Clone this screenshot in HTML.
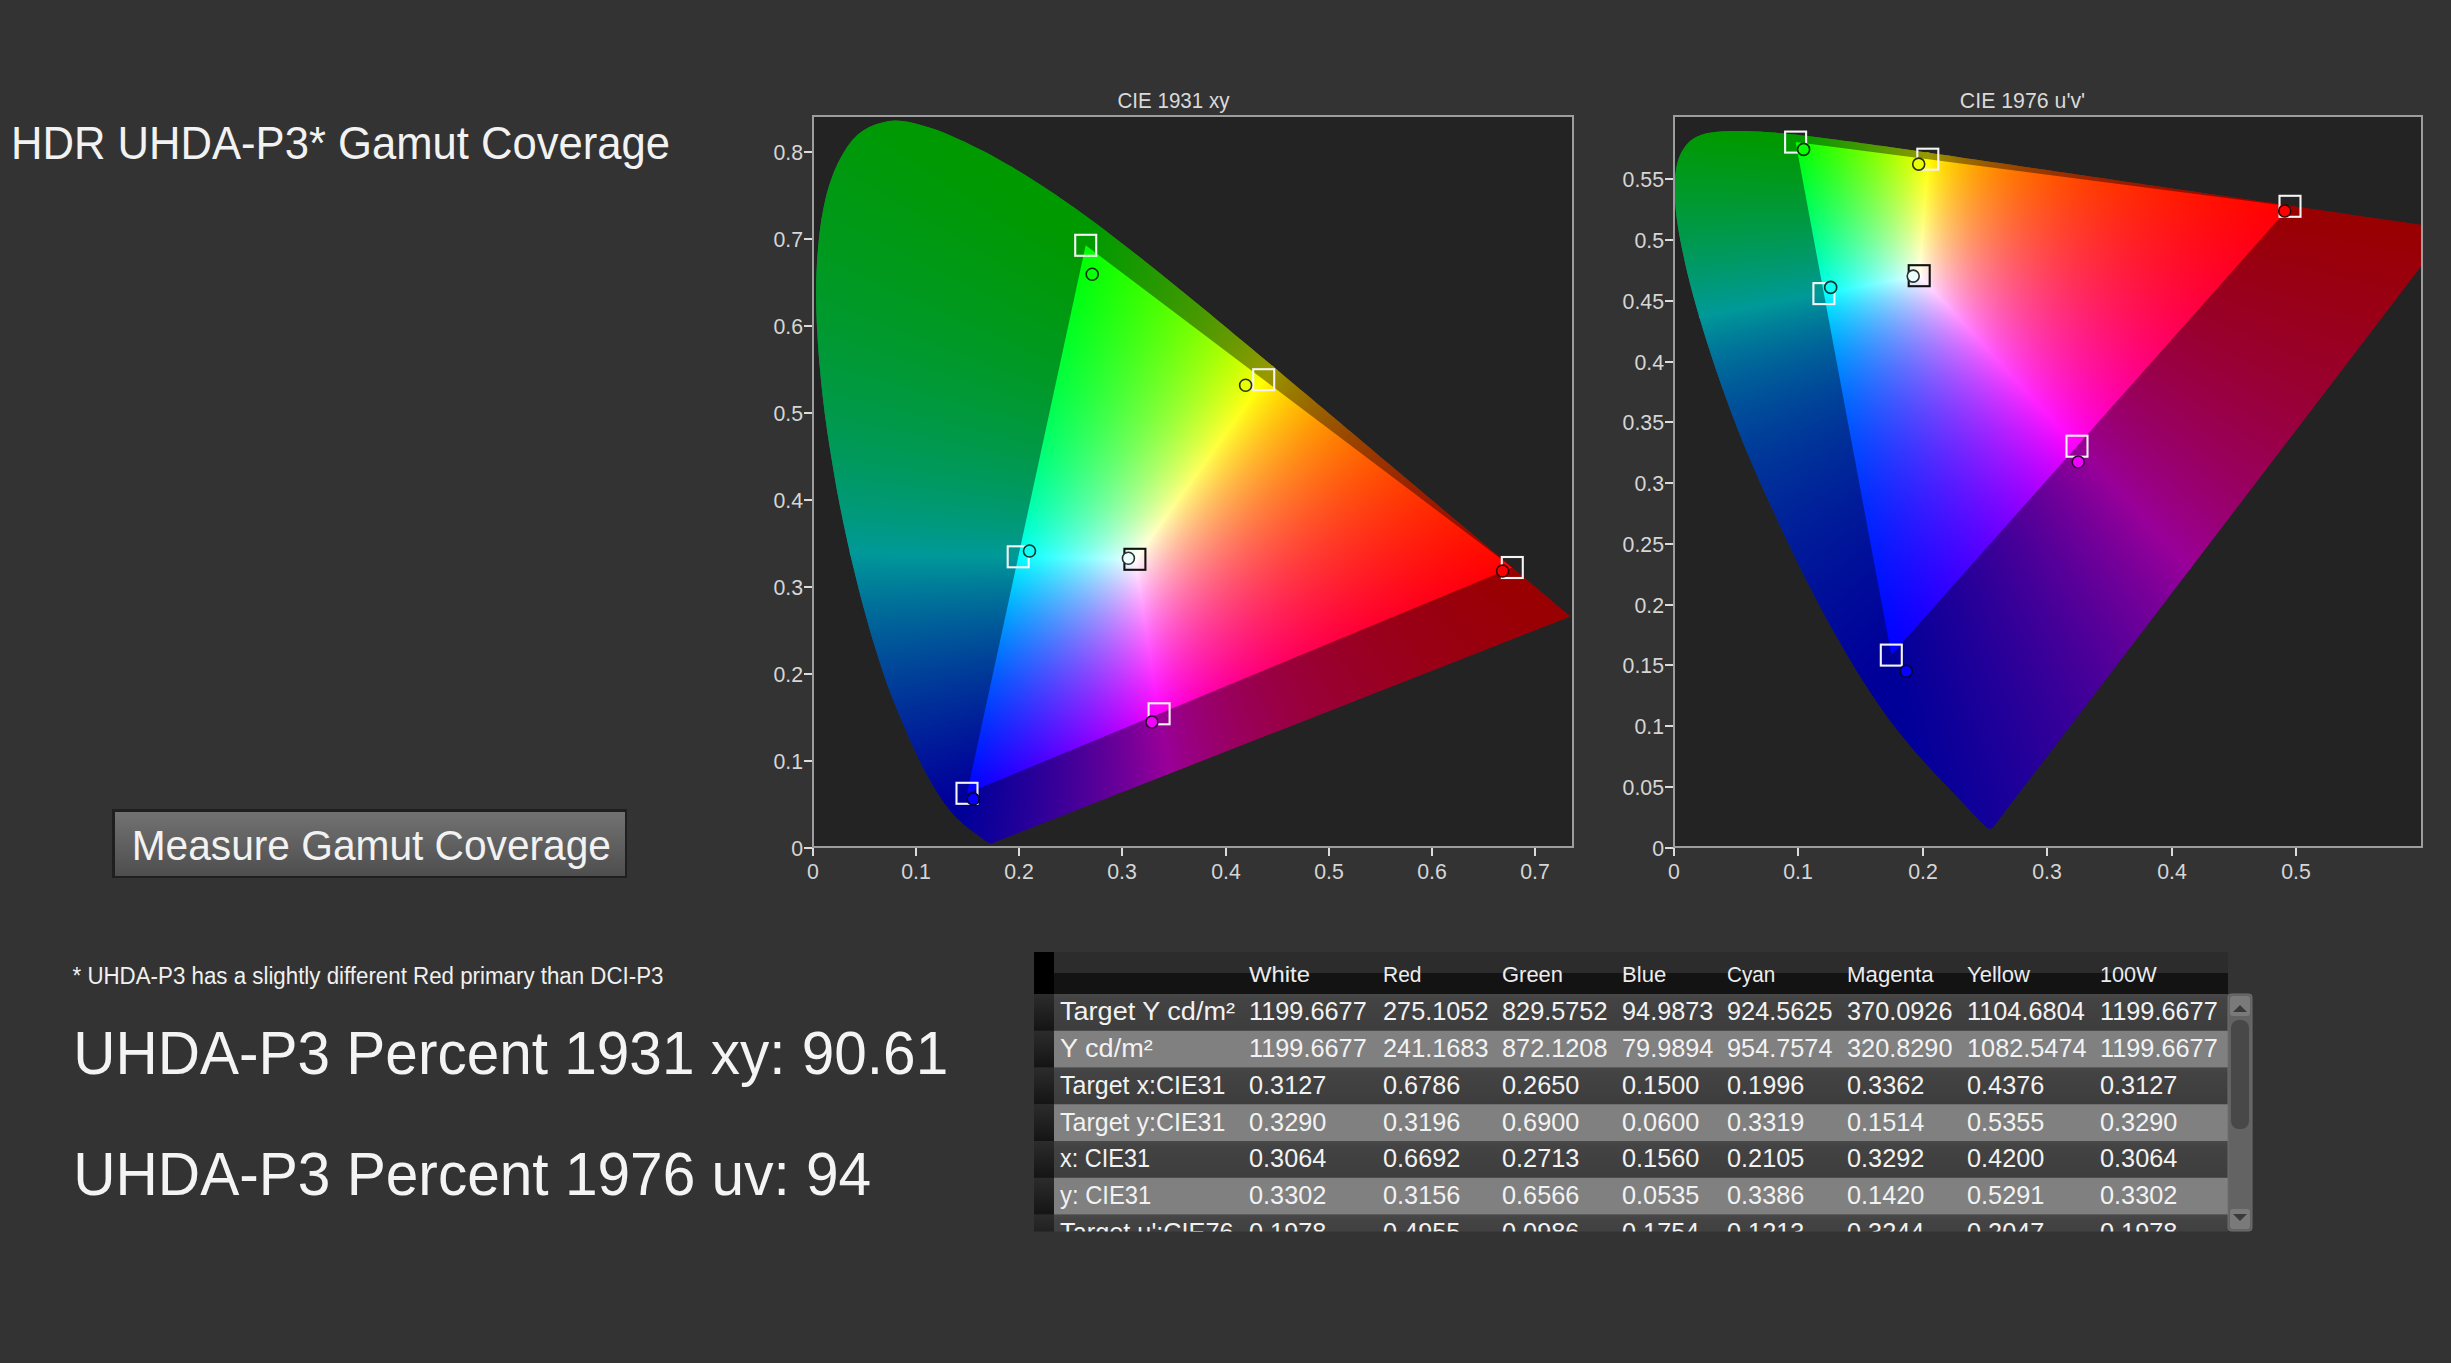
<!DOCTYPE html>
<html><head><meta charset="utf-8"><title>HDR UHDA-P3 Gamut Coverage</title>
<style>
html,body{margin:0;padding:0;background:#333333;width:2451px;height:1363px;overflow:hidden}
svg{position:absolute;left:0;top:0}
text{font-family:"Liberation Sans",sans-serif}
</style></head><body>
<div style="position:absolute;left:814px;top:117px;width:758px;height:729px;background:#232323;overflow:hidden"><div style="position:absolute;left:0;top:0;width:758px;height:729px;clip-path:path('M177.9 726.2L177.8 726.3L177.7 726.3L177.5 726.3L177.4 726.4L177.2 726.4L177.1 726.4L177.0 726.4L176.8 726.4L176.7 726.4L176.6 726.4L176.5 726.4L176.4 726.4L176.2 726.4L176.0 726.4L175.9 726.4L175.6 726.3L175.4 726.3L175.1 726.2L174.8 726.0L174.4 725.8L174.0 725.6L173.6 725.3L173.1 725.0L172.5 724.6L171.9 724.1L171.1 723.5L170.3 722.9L169.4 722.3L168.6 721.7L167.9 721.1L167.3 720.6L166.7 720.2L166.2 719.8L165.7 719.4L165.1 719.0L164.5 718.6L163.8 718.1L163.1 717.5L162.3 717.0L161.5 716.4L160.7 715.8L159.8 715.2L159.0 714.5L158.1 713.9L157.1 713.2L156.1 712.4L155.1 711.7L154.1 710.8L153.0 709.9L151.8 709.0L150.6 708.1L149.4 707.0L148.2 705.9L146.9 704.7L145.5 703.5L144.2 702.2L142.7 700.9L141.3 699.4L139.7 697.7L138.1 695.8L136.3 693.7L134.5 691.5L132.6 689.1L130.6 686.4L128.5 683.5L126.3 680.2L124.1 676.8L121.7 673.1L119.3 669.1L116.8 664.8L114.1 660.1L111.4 655.0L108.5 649.4L105.5 643.4L102.4 637.1L99.3 630.3L95.9 622.9L92.5 615.0L88.9 606.5L85.1 597.5L81.2 588.0L77.2 577.9L73.1 567.2L69.2 555.7L65.2 543.6L61.2 530.8L57.1 517.4L53.1 503.3L49.1 488.7L45.1 473.6L41.2 457.7L37.2 441.2L33.3 424.0L29.5 406.5L25.9 388.7L22.5 371.0L19.4 353.1L16.4 334.7L13.5 316.2L10.9 297.7L8.7 279.4L6.8 261.5L5.2 243.9L3.9 226.4L2.9 209.1L2.3 192.2L2.1 175.8L2.3 160.1L3.0 144.8L4.1 129.9L5.6 115.5L7.5 101.8L9.9 88.9L12.6 77.0L15.9 65.9L19.7 55.5L23.9 46.0L28.5 37.4L33.3 29.7L38.4 23.1L43.8 17.6L49.6 13.2L55.7 9.8L62.0 7.3L68.5 5.4L74.9 4.1L81.5 3.6L88.3 4.0L95.2 5.1L102.2 6.8L109.2 8.7L116.1 10.7L123.1 13.0L130.1 15.7L137.1 18.7L144.1 21.9L151.1 25.1L157.9 28.4L164.6 31.7L171.3 35.1L177.8 38.6L184.4 42.2L190.8 45.9L197.3 49.6L203.7 53.4L210.0 57.2L216.4 61.2L222.6 65.2L228.9 69.2L235.2 73.4L241.4 77.6L247.7 81.9L253.9 86.2L260.1 90.6L266.3 95.0L272.5 99.5L278.7 104.0L284.8 108.6L291.0 113.3L297.1 118.0L303.3 122.7L309.4 127.4L315.6 132.2L321.7 137.0L327.8 141.8L334.0 146.7L340.1 151.6L346.3 156.5L352.4 161.4L358.6 166.4L364.7 171.4L370.9 176.4L377.0 181.4L383.2 186.5L389.3 191.5L395.5 196.6L401.6 201.7L407.7 206.7L413.8 211.8L419.9 216.9L426.0 222.0L432.1 227.0L438.2 232.1L444.3 237.2L450.4 242.2L456.4 247.3L462.5 252.3L468.5 257.4L474.4 262.4L480.4 267.4L486.3 272.4L492.2 277.3L498.1 282.3L503.9 287.2L509.8 292.1L515.6 297.0L521.3 301.8L527.0 306.6L532.7 311.4L538.3 316.1L543.9 320.8L549.4 325.5L554.9 330.1L560.3 334.7L565.7 339.2L571.0 343.7L576.3 348.1L581.5 352.4L586.6 356.8L591.7 361.0L596.6 365.2L601.5 369.3L606.4 373.4L611.1 377.4L615.7 381.3L620.3 385.1L624.6 388.8L628.9 392.4L633.1 395.9L637.2 399.4L641.2 402.7L645.1 406.0L649.0 409.3L652.8 412.5L656.5 415.6L660.1 418.6L663.6 421.6L667.0 424.4L670.3 427.2L673.4 429.8L676.5 432.4L679.5 434.9L682.4 437.3L685.1 439.6L687.8 441.8L690.4 444.0L692.9 446.1L695.3 448.2L697.6 450.1L699.9 452.0L702.1 453.9L704.1 455.6L706.1 457.3L708.0 458.9L709.9 460.5L711.7 462.0L713.4 463.4L715.0 464.8L716.6 466.1L718.1 467.4L719.6 468.6L721.0 469.8L722.4 471.0L723.7 472.1L725.0 473.2L726.2 474.2L727.4 475.2L728.6 476.2L729.7 477.1L730.8 478.1L731.9 479.0L732.9 479.8L733.9 480.7L734.9 481.5L735.8 482.3L736.7 483.1L737.6 483.8L738.4 484.5L739.2 485.2L740.0 485.9L740.8 486.5L741.5 487.1L742.2 487.7L742.9 488.2L743.5 488.7L744.1 489.2L744.7 489.7L745.2 490.1L745.7 490.6L746.2 491.0L746.7 491.4L747.2 491.9L747.9 492.4L748.6 493.0L749.3 493.6L750.0 494.2L750.7 494.8L751.4 495.3L752.0 495.9L752.7 496.4L753.3 497.0L753.9 497.5L754.4 497.9L754.9 498.3L755.2 498.6L755.5 498.9L755.8 499.1L755.9 499.2L756.1 499.3L756.2 499.4Z')"><div style="position:absolute;left:0;top:0;width:758px;height:729px;clip-path:polygon(319.23px 441.91px,2068.42px -1996.16px,4698.87px 1483.06px,784.11px 3406.32px);background:conic-gradient(from 31.54deg at 153.04px 676.31px,rgb(255,255,255) 0.00deg,rgb(255,255,255) 2.34deg,rgb(255,255,255) 3.51deg,rgb(255,255,255) 4.10deg,rgb(255,245.3,255) 4.68deg,rgb(255,226.6,255) 5.86deg,rgb(255,209.5,255) 7.03deg,rgb(255,193.8,255) 8.20deg,rgb(255,179.2,255) 9.37deg,rgb(255,153.1,255) 11.71deg,rgb(255,130.4,255) 14.05deg,rgb(255,110.3,255) 16.40deg,rgb(255,92.3,255) 18.74deg,rgb(255,76.2,255) 21.08deg,rgb(255,61.5,255) 23.42deg,rgb(255,48.1,255) 25.76deg,rgb(255,35.7,255) 28.11deg,rgb(255,13.5,255) 32.79deg,rgb(255,3.4,255) 35.13deg,rgb(255,1,255) 35.72deg,rgb(255,0,255) 36.01deg,rgb(255,0,255) 36.30deg,rgb(255,0,255) 37.47deg,rgb(255,0,255) 56.21deg,rgb(255,0,255) 74.95deg),conic-gradient(from 68.58deg at 271.67px 128.27px,rgb(255,255,0) 0.00deg,rgb(255,255,0) 13.34deg,rgb(255,255,0) 26.69deg,rgb(255,255,0) 40.03deg,rgb(255,255,0) 53.37deg,rgb(255,255,0) 56.71deg,rgb(255,255,0) 58.37deg,rgb(255,255,4) 60.04deg,rgb(255,255,22.6) 66.71deg,rgb(255,255,44.2) 73.38deg,rgb(255,255,56.7) 76.72deg,rgb(255,255,70.5) 80.06deg,rgb(255,255,86.2) 83.39deg,rgb(255,255,104.2) 86.73deg,rgb(255,255,125.2) 90.06deg,rgb(255,255,137.1) 91.73deg,rgb(255,255,150.3) 93.40deg,rgb(255,255,164.8) 95.07deg,rgb(255,255,180.9) 96.73deg,rgb(255,255,199) 98.40deg,rgb(255,255,219.5) 100.07deg,rgb(255,255,242.9) 101.74deg,rgb(255,255,255) 102.57deg,rgb(255,255,255) 103.40deg,rgb(255,255,255) 106.74deg);background-blend-mode:multiply"></div><div style="position:absolute;left:0;top:0;width:758px;height:729px;clip-path:polygon(321.64px 443.82px,2070.37px -1994.76px,-1690.82px -3583.00px,-2678.44px 378.53px);background:conic-gradient(from -35.20deg at 153.04px 676.31px,rgb(0,255,255) 0.00deg,rgb(0,255,255) 18.70deg,rgb(0,255,255) 37.41deg,rgb(0,255,255) 46.76deg,rgb(0,255,255) 47.35deg,rgb(3.7,255,255) 47.93deg,rgb(12.4,255,255) 49.10deg,rgb(30.4,255,255) 51.44deg,rgb(49.7,255,255) 53.77deg,rgb(70.5,255,255) 56.11deg,rgb(92.8,255,255) 58.45deg,rgb(117.2,255,255) 60.79deg,rgb(143.9,255,255) 63.13deg,rgb(173.3,255,255) 65.46deg,rgb(206.1,255,255) 67.80deg,rgb(223.9,255,255) 68.97deg,rgb(242.9,255,255) 70.14deg,rgb(252.9,255,255) 70.73deg,rgb(255,255,255) 70.87deg,rgb(255,255,255) 71.02deg,rgb(255,255,255) 71.31deg,rgb(255,255,255) 72.48deg,rgb(255,255,255) 74.82deg),conic-gradient(from -92.38deg at 698.34px 450.48px,rgb(255,255,255) 0.00deg,rgb(255,255,255) 2.74deg,rgb(255,255,255) 3.42deg,rgb(255,255,255) 3.59deg,rgb(255,255,252.7) 3.76deg,rgb(255,255,247.3) 4.11deg,rgb(255,255,226.9) 5.47deg,rgb(255,255,208.5) 6.84deg,rgb(255,255,191.7) 8.21deg,rgb(255,255,176.3) 9.58deg,rgb(255,255,162.2) 10.95deg,rgb(255,255,137) 13.69deg,rgb(255,255,115.2) 16.42deg,rgb(255,255,96.1) 19.16deg,rgb(255,255,79) 21.90deg,rgb(255,255,63.7) 24.63deg,rgb(255,255,49.8) 27.37deg,rgb(255,255,25.2) 32.84deg,rgb(255,255,4) 38.32deg,rgb(255,255,0) 39.69deg,rgb(255,255,0) 41.06deg,rgb(255,255,0) 43.79deg,rgb(255,255,0) 54.74deg,rgb(255,255,0) 65.69deg,rgb(255,255,0) 76.64deg,rgb(255,255,0) 87.58deg);background-blend-mode:multiply"></div><div style="position:absolute;left:0;top:0;width:758px;height:729px;clip-path:polygon(322.00px 441.02px,-2678.39px 376.13px,-2641.32px 3829.84px,786.48px 3405.95px);background:conic-gradient(from -193.31deg at 271.67px 128.27px,rgb(255,255,255) 0.00deg,rgb(255,255,255) 3.60deg,rgb(255,255,255) 4.05deg,rgb(255,255,255) 4.28deg,rgb(255,255,255) 4.39deg,rgb(253.3,255,255) 4.50deg,rgb(239.1,255,255) 5.41deg,rgb(211.9,255,255) 7.21deg,rgb(186.3,255,255) 9.01deg,rgb(162,255,255) 10.81deg,rgb(139,255,255) 12.61deg,rgb(117.1,255,255) 14.41deg,rgb(76,255,255) 18.02deg,rgb(38.1,255,255) 21.62deg,rgb(2.8,255,255) 25.23deg,rgb(0.7,255,255) 25.45deg,rgb(0,255,255) 25.68deg,rgb(0,255,255) 26.13deg,rgb(0,255,255) 27.03deg,rgb(0,255,255) 28.83deg,rgb(0,255,255) 43.24deg,rgb(0,255,255) 57.66deg),conic-gradient(from -132.74deg at 698.34px 450.48px,rgb(255,0,255) 0.00deg,rgb(255,0,255) 12.01deg,rgb(255,0,255) 18.02deg,rgb(255,0,255) 19.52deg,rgb(255,0.2,255) 20.27deg,rgb(255,5.9,255) 21.02deg,rgb(255,29.6,255) 24.03deg,rgb(255,55,255) 27.03deg,rgb(255,82.5,255) 30.03deg,rgb(255,112.7,255) 33.04deg,rgb(255,145.9,255) 36.04deg,rgb(255,163.9,255) 37.54deg,rgb(255,183,255) 39.04deg,rgb(255,203.2,255) 40.54deg,rgb(255,224.9,255) 42.04deg,rgb(255,248,255) 43.55deg,rgb(255,254,255) 43.92deg,rgb(255,255,255) 44.30deg,rgb(255,255,255) 45.05deg,rgb(255,255,255) 48.05deg);background-blend-mode:multiply"></div><svg width="758" height="729" style="position:absolute;left:0;top:0"><path d="M-5 -5H763V734H-5ZM698.34 450.48L271.67 128.27L153.04 676.31Z" fill="#000" fill-opacity="0.4" fill-rule="evenodd"/></svg></div></div>
<div style="position:absolute;left:1675px;top:117px;width:746px;height:729px;background:#232323;overflow:hidden"><div style="position:absolute;left:0;top:0;width:746px;height:729px;clip-path:path('M317.7 710.7L317.5 710.8L317.3 711.0L317.1 711.1L316.8 711.3L316.5 711.4L316.3 711.5L316.1 711.6L315.9 711.6L315.7 711.7L315.4 711.7L315.2 711.6L314.8 711.5L314.5 711.5L314.2 711.5L313.8 711.4L313.3 711.2L312.7 710.9L311.9 710.4L311.0 709.6L310.0 708.8L308.9 707.7L307.6 706.5L306.1 705.1L304.4 703.4L302.3 701.2L299.9 698.7L297.4 696.0L294.8 693.2L292.3 690.6L290.1 688.2L288.3 686.2L286.6 684.5L285.1 682.9L283.5 681.2L281.9 679.5L280.1 677.6L278.1 675.5L276.0 673.4L273.9 671.1L271.6 668.8L269.3 666.4L266.9 663.9L264.5 661.3L262.0 658.7L259.4 656.0L256.7 653.1L254.0 650.1L251.1 647.0L248.1 643.6L245.0 640.2L241.8 636.6L238.6 632.9L235.2 628.8L231.6 624.5L228.0 620.1L224.4 615.7L220.7 611.1L216.9 606.1L212.7 600.5L208.3 594.2L203.6 587.4L198.7 580.2L193.6 572.7L188.4 564.6L182.9 555.9L177.3 546.5L171.5 536.7L165.6 526.6L159.6 516.2L153.4 505.2L147.1 493.6L140.7 481.3L134.1 468.5L127.5 455.5L120.9 442.1L114.3 428.5L107.6 414.5L101.0 400.0L94.3 385.4L87.6 370.9L81.1 356.3L74.7 341.6L68.6 326.9L62.7 312.2L57.1 297.6L51.7 283.0L46.6 268.7L41.7 254.8L37.1 241.1L32.9 227.9L28.8 215.0L25.0 202.3L21.4 190.1L18.2 178.4L15.2 167.3L12.6 156.9L10.3 146.9L8.2 137.3L6.3 128.2L4.6 119.6L3.2 111.5L2.1 104.0L1.2 97.0L0.5 90.3L-0.0 84.0L-0.3 78.0L-0.5 72.4L-0.4 67.3L-0.1 62.4L0.3 57.7L0.9 53.4L1.6 49.3L2.5 45.5L3.6 42.0L4.8 38.8L6.2 35.7L7.8 32.9L9.5 30.4L11.2 28.0L13.1 25.9L15.1 24.1L17.2 22.5L19.4 21.1L21.8 19.8L24.2 18.7L26.6 17.8L29.1 16.9L31.7 16.3L34.4 15.8L37.1 15.4L39.9 15.1L42.7 14.7L45.5 14.5L48.3 14.3L51.3 14.2L54.2 14.1L57.2 14.0L60.2 14.0L63.1 14.0L66.0 14.0L69.0 14.0L71.9 14.1L74.9 14.2L77.9 14.3L81.0 14.4L84.0 14.5L87.1 14.7L90.2 14.9L93.3 15.1L96.5 15.4L99.7 15.6L103.0 15.9L106.3 16.2L109.6 16.5L113.0 16.9L116.5 17.2L120.0 17.6L123.5 18.0L127.1 18.4L130.7 18.8L134.4 19.3L138.2 19.7L142.0 20.2L145.9 20.7L149.8 21.2L153.8 21.7L157.9 22.2L162.0 22.8L166.3 23.4L170.6 23.9L174.9 24.5L179.4 25.1L183.9 25.8L188.5 26.4L193.2 27.1L197.9 27.7L202.8 28.4L207.7 29.1L212.7 29.8L217.8 30.6L222.9 31.3L228.2 32.1L233.6 32.8L239.0 33.6L244.5 34.4L250.2 35.2L255.9 36.1L261.7 36.9L267.5 37.8L273.5 38.6L279.6 39.5L285.7 40.4L292.0 41.4L298.3 42.3L304.8 43.2L311.3 44.2L317.9 45.2L324.6 46.1L331.3 47.1L338.2 48.1L345.2 49.2L352.2 50.2L359.3 51.2L366.4 52.3L373.7 53.3L381.0 54.4L388.4 55.5L395.8 56.6L403.3 57.7L410.8 58.8L418.3 59.9L425.9 61.0L433.5 62.1L441.1 63.2L448.7 64.4L456.3 65.5L463.7 66.6L471.1 67.7L478.5 68.7L485.8 69.8L493.1 70.9L500.4 71.9L507.7 73.0L514.9 74.1L522.1 75.1L529.3 76.2L536.4 77.2L543.3 78.2L550.1 79.2L556.8 80.2L563.3 81.1L569.7 82.1L576.0 83.0L582.2 83.9L588.3 84.8L594.2 85.6L600.0 86.5L605.7 87.3L611.2 88.1L616.6 88.9L621.8 89.7L626.9 90.5L631.8 91.2L636.6 91.9L641.3 92.6L645.8 93.2L650.3 93.9L654.5 94.5L658.6 95.1L662.6 95.7L666.5 96.3L670.3 96.8L674.0 97.4L677.6 97.9L681.1 98.4L684.4 98.9L687.7 99.4L691.0 99.9L694.2 100.3L697.3 100.8L700.3 101.2L703.2 101.7L706.1 102.1L708.9 102.5L711.6 102.9L714.3 103.3L716.8 103.7L719.3 104.0L721.7 104.4L724.0 104.7L726.3 105.0L728.4 105.3L730.5 105.6L732.5 105.9L734.4 106.2L736.3 106.5L738.0 106.7L739.5 106.9L741.0 107.2L742.5 107.4L744.0 107.6L745.8 107.9L747.7 108.2L749.9 108.5L752.1 108.8L754.4 109.1L756.6 109.5L758.7 109.8L760.8 110.1L762.8 110.4L764.9 110.7L766.8 111.0L768.5 111.2L769.9 111.4L771.1 111.6L772.1 111.7L772.8 111.9L773.4 111.9L773.9 112.0L774.3 112.1Z')"><div style="position:absolute;left:0;top:0;width:746px;height:729px;clip-path:polygon(242.61px 159.27px,463.00px -2833.30px,4491.83px -1327.14px,2280.34px 2361.94px);background:conic-gradient(from 1.96deg at 216.33px 538.05px,rgb(255,255,255) 0.00deg,rgb(255,255,255) 1.67deg,rgb(255,255,255) 2.09deg,rgb(255,255,255) 2.19deg,rgb(255,254.9,255) 2.24deg,rgb(255,253.8,255) 2.30deg,rgb(255,249.1,255) 2.51deg,rgb(255,231.8,255) 3.34deg,rgb(255,216.1,255) 4.18deg,rgb(255,201.9,255) 5.01deg,rgb(255,188.9,255) 5.85deg,rgb(255,177,255) 6.68deg,rgb(255,156,255) 8.35deg,rgb(255,138,255) 10.02deg,rgb(255,122.3,255) 11.69deg,rgb(255,108.6,255) 13.36deg,rgb(255,96.4,255) 15.03deg,rgb(255,85.5,255) 16.70deg,rgb(255,66.7,255) 20.05deg,rgb(255,51.1,255) 23.39deg,rgb(255,37.8,255) 26.73deg,rgb(255,26.3,255) 30.07deg,rgb(255,16.2,255) 33.41deg,rgb(255,7.2,255) 36.75deg,rgb(255,3,255) 38.42deg,rgb(255,1,255) 39.26deg,rgb(255,0,255) 40.09deg,rgb(255,0,255) 53.45deg,rgb(255,0,255) 66.82deg,rgb(255,0,255) 80.18deg,rgb(255,0,255) 93.55deg,rgb(255,0,255) 106.91deg),conic-gradient(from 78.67deg at 120.62px 25.08px,rgb(255,255,0) 0.00deg,rgb(255,255,0) 15.23deg,rgb(255,255,0) 17.13deg,rgb(255,255,0) 18.08deg,rgb(255,255,0) 18.56deg,rgb(255,255,1.2) 19.03deg,rgb(255,255,16.4) 22.84deg,rgb(255,255,32.4) 26.65deg,rgb(255,255,49.6) 30.45deg,rgb(255,255,68.1) 34.26deg,rgb(255,255,88.3) 38.07deg,rgb(255,255,110.6) 41.88deg,rgb(255,255,135.8) 45.68deg,rgb(255,255,149.6) 47.59deg,rgb(255,255,164.4) 49.49deg,rgb(255,255,180.4) 51.39deg,rgb(255,255,197.8) 53.30deg,rgb(255,255,216.8) 55.20deg,rgb(255,255,237.6) 57.10deg,rgb(255,255,248.7) 58.05deg,rgb(255,255,254.6) 58.53deg,rgb(255,255,255) 59.01deg,rgb(255,255,255) 60.91deg);background-blend-mode:multiply"></div><div style="position:absolute;left:0;top:0;width:746px;height:729px;clip-path:polygon(245.48px 159.85px,465.39px -2833.12px,-3110.18px -2840.95px,-2704.41px 711.53px);background:conic-gradient(from -34.33deg at 216.33px 538.05px,rgb(0,255,255) 0.00deg,rgb(0,255,255) 10.19deg,rgb(0,255,255) 20.38deg,rgb(0,255,255) 22.93deg,rgb(0,255,255) 23.57deg,rgb(0,255,255) 23.73deg,rgb(1.7,255,255) 23.89deg,rgb(6,255,255) 24.21deg,rgb(23.6,255,255) 25.48deg,rgb(60.9,255,255) 28.03deg,rgb(101.3,255,255) 30.58deg,rgb(122.8,255,255) 31.85deg,rgb(145.4,255,255) 33.12deg,rgb(169.1,255,255) 34.40deg,rgb(193.9,255,255) 35.67deg,rgb(220.2,255,255) 36.95deg,rgb(247.9,255,255) 38.22deg,rgb(255,255,255) 38.54deg,rgb(255,255,255) 38.86deg,rgb(255,255,255) 39.49deg,rgb(255,255,255) 40.77deg),conic-gradient(from -102.85deg at 615.01px 89.35px,rgb(255,255,255) 0.00deg,rgb(255,255,255) 1.77deg,rgb(255,255,255) 2.21deg,rgb(255,255,247.2) 2.66deg,rgb(255,255,230.7) 3.54deg,rgb(255,255,199.3) 5.31deg,rgb(255,255,170.1) 7.08deg,rgb(255,255,142.9) 8.86deg,rgb(255,255,117.2) 10.63deg,rgb(255,255,93.1) 12.40deg,rgb(255,255,70.3) 14.17deg,rgb(255,255,48.6) 15.94deg,rgb(255,255,28) 17.71deg,rgb(255,255,8.3) 19.48deg,rgb(255,255,3.6) 19.93deg,rgb(255,255,1.2) 20.15deg,rgb(255,255,0) 20.26deg,rgb(255,255,0) 20.37deg,rgb(255,255,0) 21.25deg,rgb(255,255,0) 28.34deg);background-blend-mode:multiply"></div><div style="position:absolute;left:0;top:0;width:746px;height:729px;clip-path:polygon(244.75px 157.10px,-2704.85px 709.17px,-1170.18px 4430.65px,2282.10px 2360.31px);background:conic-gradient(from 134.88deg at 120.62px 25.08px,rgb(255,255,255) 0.00deg,rgb(255,255,255) 1.25deg,rgb(255,255,255) 1.88deg,rgb(255,255,255) 2.19deg,rgb(255,255,255) 2.34deg,rgb(253.2,255,255) 2.50deg,rgb(223.9,255,255) 5.00deg,rgb(197.3,255,255) 7.50deg,rgb(172.8,255,255) 10.00deg,rgb(150.3,255,255) 12.50deg,rgb(129.4,255,255) 15.00deg,rgb(109.8,255,255) 17.50deg,rgb(91.4,255,255) 20.00deg,rgb(57.4,255,255) 25.00deg,rgb(26.3,255,255) 30.00deg,rgb(11.7,255,255) 32.50deg,rgb(4.5,255,255) 33.75deg,rgb(1,255,255) 34.38deg,rgb(0,255,255) 35.00deg,rgb(0,255,255) 40.00deg,rgb(0,255,255) 50.01deg,rgb(0,255,255) 60.01deg,rgb(0,255,255) 70.01deg,rgb(0,255,255) 80.01deg),conic-gradient(from -194.10deg at 615.01px 89.35px,rgb(255,0,255) 0.00deg,rgb(255,0,255) 11.98deg,rgb(255,0,255) 23.96deg,rgb(255,0,255) 35.93deg,rgb(255,0,255) 47.91deg,rgb(255,0,255) 53.90deg,rgb(255,0,255) 55.40deg,rgb(255,3.2,255) 56.89deg,rgb(255,11.9,255) 59.89deg,rgb(255,31.7,255) 65.88deg,rgb(255,43.2,255) 68.87deg,rgb(255,56.1,255) 71.87deg,rgb(255,70.6,255) 74.86deg,rgb(255,87.4,255) 77.85deg,rgb(255,107.1,255) 80.85deg,rgb(255,118.3,255) 82.35deg,rgb(255,130.6,255) 83.84deg,rgb(255,144.2,255) 85.34deg,rgb(255,159.3,255) 86.84deg,rgb(255,176.2,255) 88.33deg,rgb(255,195.3,255) 89.83deg,rgb(255,217.1,255) 91.33deg,rgb(255,242.3,255) 92.83deg,rgb(255,249.2,255) 93.20deg,rgb(255,252.7,255) 93.39deg,rgb(255,254.5,255) 93.48deg,rgb(255,255,255) 93.57deg,rgb(255,255,255) 94.32deg,rgb(255,255,255) 95.82deg);background-blend-mode:multiply"></div><svg width="746" height="729" style="position:absolute;left:0;top:0"><path d="M-5 -5H751V734H-5ZM615.01 89.35L120.62 25.08L216.33 538.05Z" fill="#000" fill-opacity="0.4" fill-rule="evenodd"/></svg></div></div>
<svg width="2451" height="1363" viewBox="0 0 2451 1363">
<rect x="813" y="116" width="760" height="731" fill="none" stroke="#9d9d9d" stroke-width="2"/>
<rect x="1674" y="116" width="748" height="731" fill="none" stroke="#9d9d9d" stroke-width="2"/>
<rect x="812" y="848" width="2" height="8" fill="#dcdcdc"/>
<text x="813" y="879" font-size="21.3" fill="#d6d6d6" text-anchor="middle">0</text>
<rect x="915" y="848" width="2" height="8" fill="#dcdcdc"/>
<text x="916" y="879" font-size="21.3" fill="#d6d6d6" text-anchor="middle">0.1</text>
<rect x="1018" y="848" width="2" height="8" fill="#dcdcdc"/>
<text x="1019" y="879" font-size="21.3" fill="#d6d6d6" text-anchor="middle">0.2</text>
<rect x="1121" y="848" width="2" height="8" fill="#dcdcdc"/>
<text x="1122" y="879" font-size="21.3" fill="#d6d6d6" text-anchor="middle">0.3</text>
<rect x="1225" y="848" width="2" height="8" fill="#dcdcdc"/>
<text x="1226" y="879" font-size="21.3" fill="#d6d6d6" text-anchor="middle">0.4</text>
<rect x="1328" y="848" width="2" height="8" fill="#dcdcdc"/>
<text x="1329" y="879" font-size="21.3" fill="#d6d6d6" text-anchor="middle">0.5</text>
<rect x="1431" y="848" width="2" height="8" fill="#dcdcdc"/>
<text x="1432" y="879" font-size="21.3" fill="#d6d6d6" text-anchor="middle">0.6</text>
<rect x="1534" y="848" width="2" height="8" fill="#dcdcdc"/>
<text x="1535" y="879" font-size="21.3" fill="#d6d6d6" text-anchor="middle">0.7</text>
<rect x="804" y="847" width="8" height="2" fill="#dcdcdc"/>
<text x="803" y="855.5" font-size="21.3" fill="#d6d6d6" text-anchor="end">0</text>
<rect x="804" y="760" width="8" height="2" fill="#dcdcdc"/>
<text x="803" y="768.5" font-size="21.3" fill="#d6d6d6" text-anchor="end">0.1</text>
<rect x="804" y="673" width="8" height="2" fill="#dcdcdc"/>
<text x="803" y="681.5" font-size="21.3" fill="#d6d6d6" text-anchor="end">0.2</text>
<rect x="804" y="586" width="8" height="2" fill="#dcdcdc"/>
<text x="803" y="594.5" font-size="21.3" fill="#d6d6d6" text-anchor="end">0.3</text>
<rect x="804" y="499" width="8" height="2" fill="#dcdcdc"/>
<text x="803" y="507.5" font-size="21.3" fill="#d6d6d6" text-anchor="end">0.4</text>
<rect x="804" y="412" width="8" height="2" fill="#dcdcdc"/>
<text x="803" y="420.5" font-size="21.3" fill="#d6d6d6" text-anchor="end">0.5</text>
<rect x="804" y="325" width="8" height="2" fill="#dcdcdc"/>
<text x="803" y="333.5" font-size="21.3" fill="#d6d6d6" text-anchor="end">0.6</text>
<rect x="804" y="238" width="8" height="2" fill="#dcdcdc"/>
<text x="803" y="246.5" font-size="21.3" fill="#d6d6d6" text-anchor="end">0.7</text>
<rect x="804" y="151" width="8" height="2" fill="#dcdcdc"/>
<text x="803" y="159.5" font-size="21.3" fill="#d6d6d6" text-anchor="end">0.8</text>
<rect x="1673" y="848" width="2" height="8" fill="#dcdcdc"/>
<text x="1674" y="879" font-size="21.3" fill="#d6d6d6" text-anchor="middle">0</text>
<rect x="1797" y="848" width="2" height="8" fill="#dcdcdc"/>
<text x="1798" y="879" font-size="21.3" fill="#d6d6d6" text-anchor="middle">0.1</text>
<rect x="1922" y="848" width="2" height="8" fill="#dcdcdc"/>
<text x="1923" y="879" font-size="21.3" fill="#d6d6d6" text-anchor="middle">0.2</text>
<rect x="2046" y="848" width="2" height="8" fill="#dcdcdc"/>
<text x="2047" y="879" font-size="21.3" fill="#d6d6d6" text-anchor="middle">0.3</text>
<rect x="2171" y="848" width="2" height="8" fill="#dcdcdc"/>
<text x="2172" y="879" font-size="21.3" fill="#d6d6d6" text-anchor="middle">0.4</text>
<rect x="2295" y="848" width="2" height="8" fill="#dcdcdc"/>
<text x="2296" y="879" font-size="21.3" fill="#d6d6d6" text-anchor="middle">0.5</text>
<rect x="1665" y="847" width="8" height="2" fill="#dcdcdc"/>
<text x="1664" y="855.5" font-size="21.3" fill="#d6d6d6" text-anchor="end">0</text>
<rect x="1665" y="786" width="8" height="2" fill="#dcdcdc"/>
<text x="1664" y="794.5" font-size="21.3" fill="#d6d6d6" text-anchor="end">0.05</text>
<rect x="1665" y="725" width="8" height="2" fill="#dcdcdc"/>
<text x="1664" y="733.5" font-size="21.3" fill="#d6d6d6" text-anchor="end">0.1</text>
<rect x="1665" y="664" width="8" height="2" fill="#dcdcdc"/>
<text x="1664" y="672.5" font-size="21.3" fill="#d6d6d6" text-anchor="end">0.15</text>
<rect x="1665" y="604" width="8" height="2" fill="#dcdcdc"/>
<text x="1664" y="612.5" font-size="21.3" fill="#d6d6d6" text-anchor="end">0.2</text>
<rect x="1665" y="543" width="8" height="2" fill="#dcdcdc"/>
<text x="1664" y="551.5" font-size="21.3" fill="#d6d6d6" text-anchor="end">0.25</text>
<rect x="1665" y="482" width="8" height="2" fill="#dcdcdc"/>
<text x="1664" y="490.5" font-size="21.3" fill="#d6d6d6" text-anchor="end">0.3</text>
<rect x="1665" y="421" width="8" height="2" fill="#dcdcdc"/>
<text x="1664" y="429.5" font-size="21.3" fill="#d6d6d6" text-anchor="end">0.35</text>
<rect x="1665" y="361" width="8" height="2" fill="#dcdcdc"/>
<text x="1664" y="369.5" font-size="21.3" fill="#d6d6d6" text-anchor="end">0.4</text>
<rect x="1665" y="300" width="8" height="2" fill="#dcdcdc"/>
<text x="1664" y="308.5" font-size="21.3" fill="#d6d6d6" text-anchor="end">0.45</text>
<rect x="1665" y="239" width="8" height="2" fill="#dcdcdc"/>
<text x="1664" y="247.5" font-size="21.3" fill="#d6d6d6" text-anchor="end">0.5</text>
<rect x="1665" y="178" width="8" height="2" fill="#dcdcdc"/>
<text x="1664" y="186.5" font-size="21.3" fill="#d6d6d6" text-anchor="end">0.55</text>
<text x="1173.5" y="107.7" font-size="21.3" fill="#dadada" text-anchor="middle" textLength="112" lengthAdjust="spacingAndGlyphs">CIE 1931 xy</text>
<text x="2022.5" y="107.7" font-size="21.3" fill="#dadada" text-anchor="middle">CIE 1976 u'v'</text>
<rect x="1501.8" y="557.0" width="21" height="21" fill="none" stroke="#f4f4f4" stroke-width="2.1"/>
<rect x="1075.2" y="234.8" width="21" height="21" fill="none" stroke="#f4f4f4" stroke-width="2.1"/>
<rect x="956.5" y="782.8" width="21" height="21" fill="none" stroke="#f4f4f4" stroke-width="2.1"/>
<rect x="1007.7" y="546.3" width="21" height="21" fill="none" stroke="#f4f4f4" stroke-width="2.1"/>
<rect x="1148.6" y="703.3" width="21" height="21" fill="none" stroke="#f4f4f4" stroke-width="2.1"/>
<rect x="1253.2" y="369.2" width="21" height="21" fill="none" stroke="#f4f4f4" stroke-width="2.1"/>
<rect x="1124.4" y="548.8" width="21" height="21" fill="none" stroke="#111" stroke-width="2.1"/>
<circle cx="1502.6" cy="571.0" r="6" fill="#ff0002" stroke="#310404" stroke-width="1.6"/>
<circle cx="1092.2" cy="274.3" r="6" fill="#0aff08" stroke="#053105" stroke-width="1.6"/>
<circle cx="973.2" cy="799.0" r="6" fill="#0700ff" stroke="#050431" stroke-width="1.6"/>
<circle cx="1029.5" cy="551.0" r="6" fill="#10fff4" stroke="#06312f" stroke-width="1.6"/>
<circle cx="1151.9" cy="722.0" r="6" fill="#ef00ff" stroke="#2f0431" stroke-width="1.6"/>
<circle cx="1245.6" cy="385.2" r="6" fill="#e9ff0a" stroke="#2d3105" stroke-width="1.6"/>
<circle cx="1128.4" cy="558.3" r="6" fill="#ebfffd" stroke="#2e3131" stroke-width="1.6"/>
<rect x="2279.5" y="195.8" width="21" height="21" fill="none" stroke="#f4f4f4" stroke-width="2.1"/>
<rect x="1785.1" y="131.6" width="21" height="21" fill="none" stroke="#f4f4f4" stroke-width="2.1"/>
<rect x="1880.8" y="644.6" width="21" height="21" fill="none" stroke="#f4f4f4" stroke-width="2.1"/>
<rect x="1813.4" y="283.1" width="21" height="21" fill="none" stroke="#f4f4f4" stroke-width="2.1"/>
<rect x="2066.5" y="435.7" width="21" height="21" fill="none" stroke="#f4f4f4" stroke-width="2.1"/>
<rect x="1917.3" y="148.7" width="21" height="21" fill="none" stroke="#f4f4f4" stroke-width="2.1"/>
<rect x="1908.7" y="265.2" width="21" height="21" fill="none" stroke="#111" stroke-width="2.1"/>
<circle cx="2284.7" cy="211.0" r="6" fill="#ff0002" stroke="#310404" stroke-width="1.6"/>
<circle cx="1803.6" cy="149.4" r="6" fill="#0aff08" stroke="#053105" stroke-width="1.6"/>
<circle cx="1906.2" cy="671.3" r="6" fill="#0700ff" stroke="#050431" stroke-width="1.6"/>
<circle cx="1830.7" cy="287.4" r="6" fill="#10fff4" stroke="#06312f" stroke-width="1.6"/>
<circle cx="2078.2" cy="462.0" r="6" fill="#ef00ff" stroke="#2f0431" stroke-width="1.6"/>
<circle cx="1918.7" cy="164.1" r="6" fill="#e9ff0a" stroke="#2d3105" stroke-width="1.6"/>
<circle cx="1913.2" cy="276.1" r="6" fill="#ebfffd" stroke="#2e3131" stroke-width="1.6"/>
<text x="11" y="159" font-size="46.5" fill="#f2f2f2" text-anchor="start" textLength="659" lengthAdjust="spacingAndGlyphs">HDR UHDA-P3* Gamut Coverage</text>
<text x="72.5" y="983.7" font-size="23.5" fill="#f0f0f0" text-anchor="start" textLength="591" lengthAdjust="spacingAndGlyphs">* UHDA-P3 has a slightly different Red primary than DCI-P3</text>
<text x="73.2" y="1074" font-size="61" fill="#f4f4f4" text-anchor="start" textLength="875" lengthAdjust="spacingAndGlyphs">UHDA-P3 Percent 1931 xy: 90.61</text>
<text x="73.2" y="1195" font-size="61" fill="#f4f4f4" text-anchor="start" textLength="798" lengthAdjust="spacingAndGlyphs">UHDA-P3 Percent 1976 uv: 94</text>
<defs><linearGradient id="bg1" x1="0" y1="0" x2="0" y2="1"><stop offset="0" stop-color="#727272"/><stop offset="1" stop-color="#4e4e4e"/></linearGradient></defs>
<rect x="112" y="809" width="515" height="69" fill="#1f1f1f"/>
<rect x="115" y="812" width="510" height="64" fill="url(#bg1)"/>
<text x="131.7" y="860" font-size="42" fill="#f2f2f2" text-anchor="start" textLength="479.3" lengthAdjust="spacingAndGlyphs">Measure Gamut Coverage</text>
<defs><linearGradient id="rh" x1="0" y1="0" x2="0" y2="1"><stop offset="0" stop-color="#2c2c2c"/><stop offset="1" stop-color="#141414"/></linearGradient><linearGradient id="dr" x1="0" y1="0" x2="0" y2="1"><stop offset="0" stop-color="#484848"/><stop offset="0.15" stop-color="#434343"/><stop offset="1" stop-color="#3d3d3d"/></linearGradient><clipPath id="tclip"><rect x="1034" y="952" width="1194" height="279.5"/></clipPath></defs>
<g clip-path="url(#tclip)">
<rect x="1054" y="952" width="1174" height="21" fill="#2c2c2c"/><rect x="1054" y="973" width="1174" height="21" fill="#131313"/>
<rect x="1034" y="952" width="20" height="42" fill="#000"/>
<rect x="1054" y="994.00" width="1174" height="37.05" fill="url(#dr)"/>
<rect x="1034" y="994.00" width="20" height="37.05" fill="url(#rh)"/>
<rect x="1054" y="1030.75" width="1174" height="37.05" fill="#808080"/>
<rect x="1034" y="1030.75" width="20" height="37.05" fill="url(#rh)"/>
<rect x="1054" y="1067.50" width="1174" height="37.05" fill="url(#dr)"/>
<rect x="1034" y="1067.50" width="20" height="37.05" fill="url(#rh)"/>
<rect x="1054" y="1104.25" width="1174" height="37.05" fill="#808080"/>
<rect x="1034" y="1104.25" width="20" height="37.05" fill="url(#rh)"/>
<rect x="1054" y="1141.00" width="1174" height="37.05" fill="url(#dr)"/>
<rect x="1034" y="1141.00" width="20" height="37.05" fill="url(#rh)"/>
<rect x="1054" y="1177.75" width="1174" height="37.05" fill="#808080"/>
<rect x="1034" y="1177.75" width="20" height="37.05" fill="url(#rh)"/>
<rect x="1054" y="1214.50" width="1174" height="37.05" fill="url(#dr)"/>
<rect x="1034" y="1214.50" width="20" height="37.05" fill="url(#rh)"/>
<text x="1249" y="981.7" font-size="21.8" fill="#ececec" text-anchor="start" textLength="61" lengthAdjust="spacingAndGlyphs">White</text>
<text x="1383" y="981.7" font-size="21.8" fill="#ececec" text-anchor="start" textLength="38.5" lengthAdjust="spacingAndGlyphs">Red</text>
<text x="1502" y="981.7" font-size="21.8" fill="#ececec" text-anchor="start" textLength="61" lengthAdjust="spacingAndGlyphs">Green</text>
<text x="1622" y="981.7" font-size="21.8" fill="#ececec" text-anchor="start" textLength="44.2" lengthAdjust="spacingAndGlyphs">Blue</text>
<text x="1727" y="981.7" font-size="21.8" fill="#ececec" text-anchor="start" textLength="48.2" lengthAdjust="spacingAndGlyphs">Cyan</text>
<text x="1847" y="981.7" font-size="21.8" fill="#ececec" text-anchor="start" textLength="86.6" lengthAdjust="spacingAndGlyphs">Magenta</text>
<text x="1967" y="981.7" font-size="21.8" fill="#ececec" text-anchor="start" textLength="63" lengthAdjust="spacingAndGlyphs">Yellow</text>
<text x="2100" y="981.7" font-size="21.8" fill="#ececec" text-anchor="start" textLength="56.6" lengthAdjust="spacingAndGlyphs">100W</text>
<text x="1060" y="1020.4" font-size="25.3" fill="#f2f2f2" text-anchor="start" textLength="175" lengthAdjust="spacingAndGlyphs">Target Y cd/m²</text>
<text x="1249" y="1020.4" font-size="25.3" fill="#f2f2f2" text-anchor="start">1199.6677</text>
<text x="1383" y="1020.4" font-size="25.3" fill="#f2f2f2" text-anchor="start">275.1052</text>
<text x="1502" y="1020.4" font-size="25.3" fill="#f2f2f2" text-anchor="start">829.5752</text>
<text x="1622" y="1020.4" font-size="25.3" fill="#f2f2f2" text-anchor="start">94.9873</text>
<text x="1727" y="1020.4" font-size="25.3" fill="#f2f2f2" text-anchor="start">924.5625</text>
<text x="1847" y="1020.4" font-size="25.3" fill="#f2f2f2" text-anchor="start">370.0926</text>
<text x="1967" y="1020.4" font-size="25.3" fill="#f2f2f2" text-anchor="start">1104.6804</text>
<text x="2100" y="1020.4" font-size="25.3" fill="#f2f2f2" text-anchor="start">1199.6677</text>
<text x="1060" y="1057.15" font-size="25.3" fill="#f2f2f2" text-anchor="start" textLength="92.7" lengthAdjust="spacingAndGlyphs">Y cd/m²</text>
<text x="1249" y="1057.15" font-size="25.3" fill="#f2f2f2" text-anchor="start">1199.6677</text>
<text x="1383" y="1057.15" font-size="25.3" fill="#f2f2f2" text-anchor="start">241.1683</text>
<text x="1502" y="1057.15" font-size="25.3" fill="#f2f2f2" text-anchor="start">872.1208</text>
<text x="1622" y="1057.15" font-size="25.3" fill="#f2f2f2" text-anchor="start">79.9894</text>
<text x="1727" y="1057.15" font-size="25.3" fill="#f2f2f2" text-anchor="start">954.7574</text>
<text x="1847" y="1057.15" font-size="25.3" fill="#f2f2f2" text-anchor="start">320.8290</text>
<text x="1967" y="1057.15" font-size="25.3" fill="#f2f2f2" text-anchor="start">1082.5474</text>
<text x="2100" y="1057.15" font-size="25.3" fill="#f2f2f2" text-anchor="start">1199.6677</text>
<text x="1060" y="1093.9" font-size="25.3" fill="#f2f2f2" text-anchor="start" textLength="165.4" lengthAdjust="spacingAndGlyphs">Target x:CIE31</text>
<text x="1249" y="1093.9" font-size="25.3" fill="#f2f2f2" text-anchor="start">0.3127</text>
<text x="1383" y="1093.9" font-size="25.3" fill="#f2f2f2" text-anchor="start">0.6786</text>
<text x="1502" y="1093.9" font-size="25.3" fill="#f2f2f2" text-anchor="start">0.2650</text>
<text x="1622" y="1093.9" font-size="25.3" fill="#f2f2f2" text-anchor="start">0.1500</text>
<text x="1727" y="1093.9" font-size="25.3" fill="#f2f2f2" text-anchor="start">0.1996</text>
<text x="1847" y="1093.9" font-size="25.3" fill="#f2f2f2" text-anchor="start">0.3362</text>
<text x="1967" y="1093.9" font-size="25.3" fill="#f2f2f2" text-anchor="start">0.4376</text>
<text x="2100" y="1093.9" font-size="25.3" fill="#f2f2f2" text-anchor="start">0.3127</text>
<text x="1060" y="1130.65" font-size="25.3" fill="#f2f2f2" text-anchor="start" textLength="165.4" lengthAdjust="spacingAndGlyphs">Target y:CIE31</text>
<text x="1249" y="1130.65" font-size="25.3" fill="#f2f2f2" text-anchor="start">0.3290</text>
<text x="1383" y="1130.65" font-size="25.3" fill="#f2f2f2" text-anchor="start">0.3196</text>
<text x="1502" y="1130.65" font-size="25.3" fill="#f2f2f2" text-anchor="start">0.6900</text>
<text x="1622" y="1130.65" font-size="25.3" fill="#f2f2f2" text-anchor="start">0.0600</text>
<text x="1727" y="1130.65" font-size="25.3" fill="#f2f2f2" text-anchor="start">0.3319</text>
<text x="1847" y="1130.65" font-size="25.3" fill="#f2f2f2" text-anchor="start">0.1514</text>
<text x="1967" y="1130.65" font-size="25.3" fill="#f2f2f2" text-anchor="start">0.5355</text>
<text x="2100" y="1130.65" font-size="25.3" fill="#f2f2f2" text-anchor="start">0.3290</text>
<text x="1060" y="1167.4" font-size="25.3" fill="#f2f2f2" text-anchor="start" textLength="90" lengthAdjust="spacingAndGlyphs">x: CIE31</text>
<text x="1249" y="1167.4" font-size="25.3" fill="#f2f2f2" text-anchor="start">0.3064</text>
<text x="1383" y="1167.4" font-size="25.3" fill="#f2f2f2" text-anchor="start">0.6692</text>
<text x="1502" y="1167.4" font-size="25.3" fill="#f2f2f2" text-anchor="start">0.2713</text>
<text x="1622" y="1167.4" font-size="25.3" fill="#f2f2f2" text-anchor="start">0.1560</text>
<text x="1727" y="1167.4" font-size="25.3" fill="#f2f2f2" text-anchor="start">0.2105</text>
<text x="1847" y="1167.4" font-size="25.3" fill="#f2f2f2" text-anchor="start">0.3292</text>
<text x="1967" y="1167.4" font-size="25.3" fill="#f2f2f2" text-anchor="start">0.4200</text>
<text x="2100" y="1167.4" font-size="25.3" fill="#f2f2f2" text-anchor="start">0.3064</text>
<text x="1060" y="1204.15" font-size="25.3" fill="#f2f2f2" text-anchor="start" textLength="91.3" lengthAdjust="spacingAndGlyphs">y: CIE31</text>
<text x="1249" y="1204.15" font-size="25.3" fill="#f2f2f2" text-anchor="start">0.3302</text>
<text x="1383" y="1204.15" font-size="25.3" fill="#f2f2f2" text-anchor="start">0.3156</text>
<text x="1502" y="1204.15" font-size="25.3" fill="#f2f2f2" text-anchor="start">0.6566</text>
<text x="1622" y="1204.15" font-size="25.3" fill="#f2f2f2" text-anchor="start">0.0535</text>
<text x="1727" y="1204.15" font-size="25.3" fill="#f2f2f2" text-anchor="start">0.3386</text>
<text x="1847" y="1204.15" font-size="25.3" fill="#f2f2f2" text-anchor="start">0.1420</text>
<text x="1967" y="1204.15" font-size="25.3" fill="#f2f2f2" text-anchor="start">0.5291</text>
<text x="2100" y="1204.15" font-size="25.3" fill="#f2f2f2" text-anchor="start">0.3302</text>
<text x="1060" y="1240.9" font-size="25.3" fill="#f2f2f2" text-anchor="start" textLength="173.6" lengthAdjust="spacingAndGlyphs">Target u':CIE76</text>
<text x="1249" y="1240.9" font-size="25.3" fill="#f2f2f2" text-anchor="start">0.1978</text>
<text x="1383" y="1240.9" font-size="25.3" fill="#f2f2f2" text-anchor="start">0.4955</text>
<text x="1502" y="1240.9" font-size="25.3" fill="#f2f2f2" text-anchor="start">0.0986</text>
<text x="1622" y="1240.9" font-size="25.3" fill="#f2f2f2" text-anchor="start">0.1754</text>
<text x="1727" y="1240.9" font-size="25.3" fill="#f2f2f2" text-anchor="start">0.1213</text>
<text x="1847" y="1240.9" font-size="25.3" fill="#f2f2f2" text-anchor="start">0.3244</text>
<text x="1967" y="1240.9" font-size="25.3" fill="#f2f2f2" text-anchor="start">0.2047</text>
<text x="2100" y="1240.9" font-size="25.3" fill="#f2f2f2" text-anchor="start">0.1978</text>
</g>
<rect x="2228" y="994" width="24" height="237" rx="3" fill="#636363" stroke="#6e6e6e" stroke-width="1"/>
<rect x="2230" y="996" width="20" height="20" rx="3" fill="#7a7a7a"/><path d="M2233 1012h14l-7-7z" fill="#3a3a3a"/>
<rect x="2230" y="1209" width="20" height="20" rx="3" fill="#7a7a7a"/><path d="M2233 1214h14l-7 7z" fill="#3a3a3a"/>
<rect x="2231" y="1020" width="18" height="109" rx="8" fill="#484848"/>
</svg>

</body></html>
